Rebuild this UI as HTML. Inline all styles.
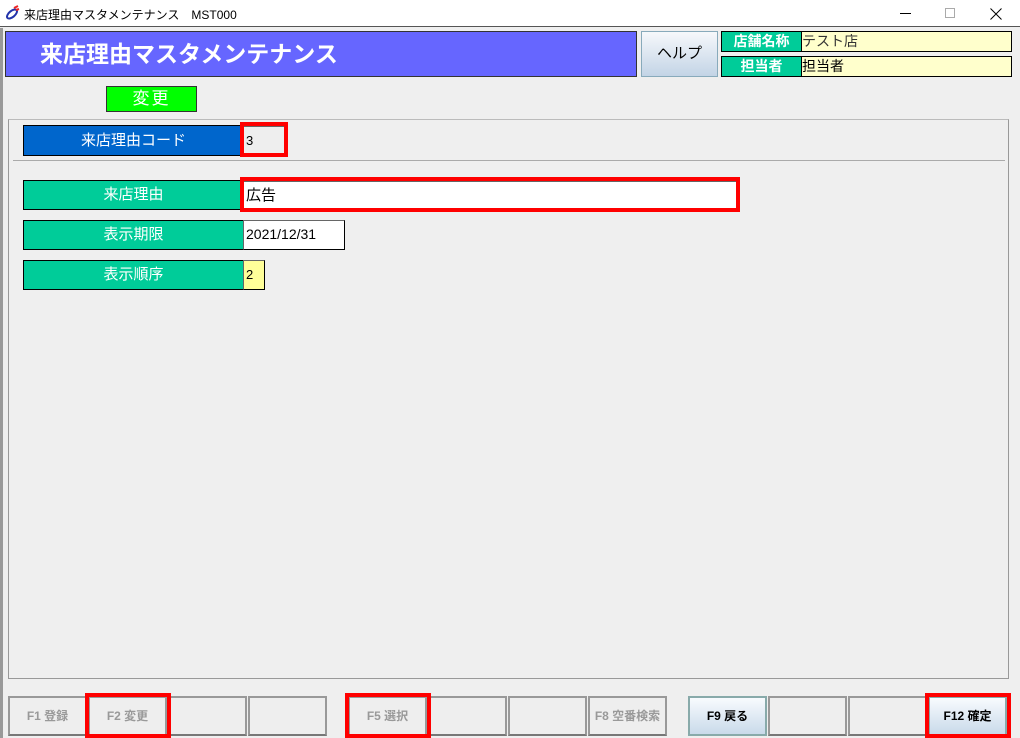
<!DOCTYPE html>
<html><head><meta charset="utf-8"><style>
*{margin:0;padding:0;box-sizing:border-box}
body{width:1020px;height:738px;background:#efefef;position:relative;overflow:hidden;font-family:"Liberation Sans","Noto Sans CJK JP",sans-serif}
.a{position:absolute}
.lbl{position:absolute;color:#fff;font-size:15px;text-align:center;border:1px solid #000}
.inp{position:absolute;background:#fff;border:1px solid #000;border-top-color:#666;border-left-color:#666;font-size:15px;padding-left:2px;line-height:27px;color:#000}
.red{position:absolute;border:4px solid #f00}
.btn{position:absolute;top:696px;height:40px;width:79px;border:2px solid #999;border-bottom-color:#777;background:#eee;font-size:12px;font-weight:bold;color:#999;text-align:center;line-height:36px}
.bb{background:linear-gradient(#f8fbfe,#c9daea);color:#000;border-color:#8aa}
</style></head><body>
<div class="a" style="left:0;top:0;width:1020px;height:27px;background:#fff;border-bottom:1px solid #555"></div>
<svg class="a" style="left:4px;top:5px" width="16" height="16"><ellipse cx="8" cy="9" rx="6" ry="3" transform="rotate(-40 8 9)" fill="none" stroke="#2233aa" stroke-width="2"/><path d="M10 3l4-2M12 5l3-1" stroke="#e22" stroke-width="2"/></svg>
<div class="a" style="left:24px;top:6px;font-size:12px;color:#000">来店理由マスタメンテナンス　MST000</div>
<div class="a" style="left:900px;top:13px;width:11px;height:1px;background:#000"></div>
<div class="a" style="left:945px;top:8px;width:10px;height:10px;border:1px solid #aaa"></div>
<svg class="a" style="left:990px;top:8px" width="12" height="12"><path d="M0.5 0.5L11.5 11.5M11.5 0.5L0.5 11.5" stroke="#000" stroke-width="1"/></svg>
<div class="a" style="left:0;top:28px;width:3px;height:710px;background:#999"></div>
<div class="a" style="left:5px;top:31px;width:632px;height:46px;background:#6666ff;border:1px solid #333;color:#fff;font-size:23px;font-weight:bold;padding-left:34px;line-height:44px">来店理由マスタメンテナンス</div>
<div class="a" style="left:641px;top:31px;width:77px;height:46px;background:linear-gradient(#f6f8fb,#c3d4e6);border:1px solid #8ab;font-size:15px;text-align:center;line-height:44px;color:#000">ヘルプ</div>
<div class="lbl" style="left:721px;top:31px;width:81px;height:21px;background:#00cc99;font-weight:bold;line-height:19px;font-size:14px">店舗名称</div>
<div class="a" style="left:801px;top:31px;width:211px;height:21px;background:#ffffcc;border:1px solid #000;font-size:14px;line-height:19px;color:#333">テスト店</div>
<div class="lbl" style="left:721px;top:56px;width:81px;height:21px;background:#00cc99;font-weight:bold;line-height:19px;font-size:14px">担当者</div>
<div class="a" style="left:801px;top:56px;width:211px;height:21px;background:#ffffcc;border:1px solid #000;font-size:14px;line-height:19px;color:#000">担当者</div>
<div class="a" style="left:106px;top:86px;width:91px;height:26px;background:#00ff00;border:1px solid #333;color:#fff;font-size:17px;text-align:center;line-height:24px;letter-spacing:2px">変更</div>
<div class="a" style="left:8px;top:119px;width:1001px;height:560px;border:1px solid #999;border-top-color:#bbb"></div>
<div class="lbl" style="left:23px;top:125px;width:221px;height:31px;background:#0066cc;line-height:29px">来店理由コード</div>
<div class="inp" style="left:243px;top:126px;width:42px;height:29px;background:#eee;font-size:13px">3</div>
<div class="red" style="left:240px;top:122px;width:48px;height:35px"></div>
<div class="a" style="left:13px;top:160px;width:992px;height:1px;background:#aaa"></div>
<div class="lbl" style="left:23px;top:180px;width:221px;height:30px;background:#00cc99;line-height:28px">来店理由</div>
<div class="inp" style="left:243px;top:181px;width:494px;height:29px">広告</div>
<div class="red" style="left:240px;top:177px;width:500px;height:35px"></div>
<div class="lbl" style="left:23px;top:220px;width:221px;height:30px;background:#00cc99;line-height:28px">表示期限</div>
<div class="inp" style="left:243px;top:220px;width:102px;height:30px;font-size:14px">2021/12/31</div>
<div class="lbl" style="left:23px;top:260px;width:221px;height:30px;background:#00cc99;line-height:28px">表示順序</div>
<div class="inp" style="left:243px;top:260px;width:22px;height:30px;background:#ffff99;font-size:13px">2</div>
<div class="btn" style="left:8px">F1 登録</div>
<div class="btn" style="left:88px">F2 変更</div>
<div class="btn" style="left:168px"></div>
<div class="btn" style="left:248px"></div>
<div class="btn" style="left:348px">F5 選択</div>
<div class="btn" style="left:428px"></div>
<div class="btn" style="left:508px"></div>
<div class="btn" style="left:588px">F8 空番検索</div>
<div class="btn bb" style="left:688px">F9 戻る</div>
<div class="btn" style="left:768px"></div>
<div class="btn" style="left:848px"></div>
<div class="btn bb" style="left:928px">F12 確定</div>
<div class="red" style="left:85px;top:693px;width:86px;height:45px"></div>
<div class="red" style="left:345px;top:693px;width:86px;height:45px"></div>
<div class="red" style="left:925px;top:693px;width:86px;height:45px"></div>
</body></html>
